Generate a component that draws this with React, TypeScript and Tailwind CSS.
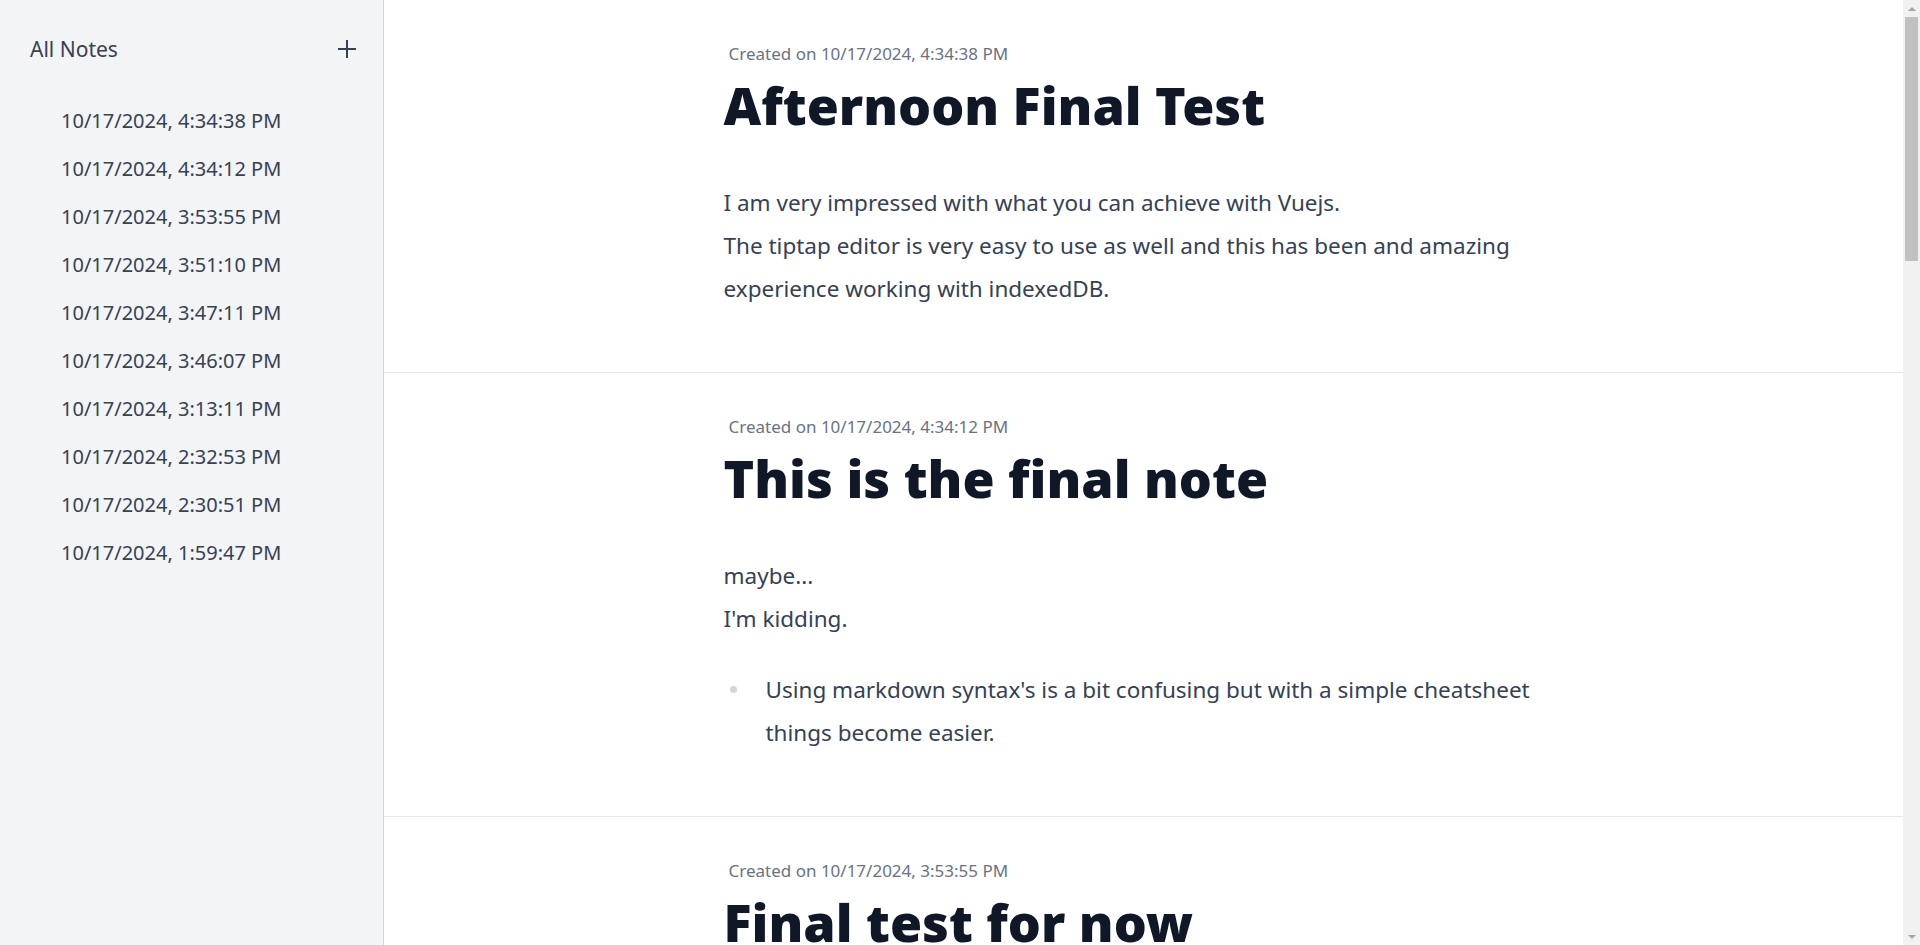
interface Note {
  id: number
  createdAt: string
  title: string
  lines: string[]
  bullets?: string[]
}

const notes: Note[] = [
  {
    id: 1,
    createdAt: '10/17/2024, 4:34:38 PM',
    title: 'Afternoon Final Test',
    lines: [
      'I am very impressed with what you can achieve with Vuejs.',
      'The tiptap editor is very easy to use as well and this has been and amazing experience working with indexedDB.',
    ],
  },
  {
    id: 2,
    createdAt: '10/17/2024, 4:34:12 PM',
    title: 'This is the final note',
    lines: ['maybe...', "I'm kidding."],
    bullets: [
      "Using markdown syntax's is a bit confusing but with a simple cheatsheet things become easier.",
    ],
  },
  {
    id: 3,
    createdAt: '10/17/2024, 3:53:55 PM',
    title: 'Final test for now',
    lines: ['Everything is saved locally, so notes survive a page reload.'],
  },
  {
    id: 4,
    createdAt: '10/17/2024, 3:51:10 PM',
    title: 'Checking the list',
    lines: ['The sidebar shows every note by the date it was created.'],
  },
  {
    id: 5,
    createdAt: '10/17/2024, 3:47:11 PM',
    title: 'Headings work',
    lines: ['Headings, bold text and lists all come through the editor.'],
  },
  {
    id: 6,
    createdAt: '10/17/2024, 3:46:07 PM',
    title: 'Another one',
    lines: ['Just another quick note to fill the list.'],
  },
  {
    id: 7,
    createdAt: '10/17/2024, 3:13:11 PM',
    title: 'Trying lists',
    lines: ['Lists are created with a dash and a space.'],
  },
  {
    id: 8,
    createdAt: '10/17/2024, 2:32:53 PM',
    title: 'Second note',
    lines: ['Writing a second note to see how the list grows.'],
  },
  {
    id: 9,
    createdAt: '10/17/2024, 2:30:51 PM',
    title: 'Hello again',
    lines: ['Testing the editor one more time.'],
  },
  {
    id: 10,
    createdAt: '10/17/2024, 1:59:47 PM',
    title: 'My first note',
    lines: ['Hello world.'],
  },
]

export default function App() {
  return (
    <div className="flex h-screen overflow-hidden bg-white font-['Noto_Sans',sans-serif]">
      <Sidebar />
      <main className="flex-1 overflow-y-auto [scrollbar-width:none]">
        {notes.map(note => (
          <NoteView key={note.id} note={note} />
        ))}
      </main>
      <ScrollTrack />
    </div>
  )
}

function Sidebar() {
  return (
    <aside className="w-96 shrink-0 border-r border-gray-300 bg-gray-100">
      <div className="flex items-center justify-between pt-[35px] pr-[27px] pl-[30px]">
        <h2 className="text-[21px] leading-7 text-gray-700">All Notes</h2>
        <button className="text-gray-700">
          <svg width="18" height="18" viewBox="0 0 18 18" fill="none">
            <path d="M9 0v18M0 9h18" stroke="currentColor" strokeWidth="2" />
          </svg>
        </button>
      </div>
      <ul className="mt-[34px]">
        {notes.map(note => (
          <li
            key={note.id}
            className="flex h-12 items-center pl-[61px] text-[20px] text-gray-700"
          >
            {note.createdAt}
          </li>
        ))}
      </ul>
    </aside>
  )
}

function NoteView({ note }: { note: Note }) {
  return (
    <section className="border-b border-gray-200 pt-[44px] pb-[62px]">
      <div className="mx-auto w-[840px]">
        <p className="pl-[5px] text-[17px] leading-5 text-gray-500">
          Created on {note.createdAt}
        </p>
        <h1 className="mt-[9px] text-[52px] leading-[64px] font-black text-gray-900">
          {note.title}
        </h1>
        <p className="mt-[44px] text-[22.5px] leading-[43px] text-gray-700">
          {note.lines.map((line, i) => (
            <span key={i}>
              {i > 0 && <br />}
              {line}
            </span>
          ))}
        </p>
        {note.bullets && (
          <ul className="mt-[28px]">
            {note.bullets.map(item => (
              <li
                key={item}
                className="relative pl-[42px] text-[22.5px] leading-[43px] text-gray-700"
              >
                <span className="absolute top-[18px] left-[6px] size-[7px] rounded-full bg-gray-300" />
                {item}
              </li>
            ))}
          </ul>
        )}
      </div>
    </section>
  )
}

// stand-in for the native page scrollbar
function ScrollTrack() {
  return (
    <div className="flex w-[17px] shrink-0 flex-col bg-[#f1f1f1]">
      <div className="flex h-[17px] items-center justify-center">
        <svg width="8" height="4" viewBox="0 0 8 4">
          <path d="M0 4L4 0L8 4Z" fill="#a3a3a3" />
        </svg>
      </div>
      <div className="mx-[2px] h-[244px] bg-[#c1c1c1]" />
      <div className="mt-auto flex h-[17px] items-center justify-center">
        <svg width="8" height="4" viewBox="0 0 8 4">
          <path d="M0 0L4 4L8 0Z" fill="#a3a3a3" />
        </svg>
      </div>
    </div>
  )
}
